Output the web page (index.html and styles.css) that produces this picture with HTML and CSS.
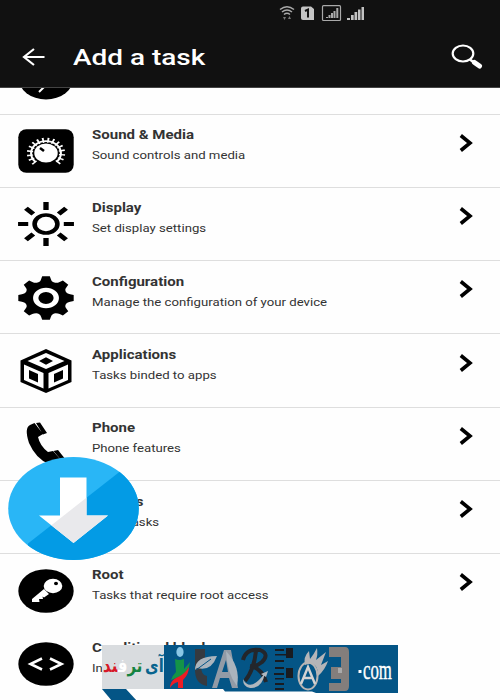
FILE: index.html
```
<!DOCTYPE html>
<html lang="en">
<head>
<meta charset="utf-8">
<title>Add a task</title>
<link rel="stylesheet" href="styles.css">
</head>
<body>
<div class="screen">
  <header class="top">
    <div class="status">
      <svg width="90" height="22" viewBox="0 0 90 22">
        <g fill="none" stroke="#aaa" stroke-width="1.500"><path d="M2 9.500Q9 4 16 9.500M4 12Q9 8 14 12M6 14.500Q9 12 12 14.500"/></g>
        <path d="M5 17h3l-1.500 3zM10 19h3l-1.500-3z" fill="#777"/>
        <path d="M25 6.500h8l3 2.500V20H25q-2 0-2-2V8.500q0-2 2-2z" fill="#c4c4c4"/>
        <path d="M27 11l3-1.500V17.500" fill="none" stroke="#111" stroke-width="2"/>
        <rect x="44.500" y="5.700" width="18" height="14.800" rx="1" fill="none" stroke="#a9a9a9" stroke-width="1.200"/>
        <path d="M48 18v-1h2v1zM50.500 18v-3h2v3zM53 18v-5h2v5zM55.500 18v-7h2v7zM58.300 18V8h2v10z" fill="#aaa"/>
        <path d="M69 20v-2h3v2zM73 20v-5h2.700v5zM76.500 20v-8h2.700v8zM80 20V9.500h2.500V20zM83.500 20V7h2.500v13z" fill="#c2c2c2"/>
      </svg>
    </div>
    <div class="bar">
      <svg class="back" width="24" height="20" viewBox="0 0 24 20"><path d="M13 2L3 10l10 8M3 10h20.500" fill="none" stroke="#fff" stroke-width="2.200"/></svg>
      <h1><span class="wide">Add a task</span></h1>
      <svg class="search" width="34" height="28" viewBox="0 0 34 28"><ellipse cx="13" cy="10.500" rx="10.300" ry="8" fill="none" stroke="#fff" stroke-width="2.200"/><path d="M20 16.500l4 3" stroke="#fff" stroke-width="2.600"/><path d="M24.500 19.500l5 3.500" stroke="#fff" stroke-width="5" stroke-linecap="round"/></svg>
    </div>
  </header>

  <ul class="list">
    <li class="row first">
      <svg class="icon" viewBox="0 0 56 44"><ellipse cx="28" cy="22" rx="27.500" ry="21.500" /><path d="M21 36l5-5" stroke="#fff" stroke-width="2"/></svg>
      <div class="text"><b class="wide"></b><span class="wide">Managing</span></div>
    </li>
    <li class="row">
      <svg class="icon" viewBox="0 0 56 44"><rect x=".3" y=".2" width="55.400" height="43.600" rx="8"/>
        <g transform="translate(28 24) scale(1.22 1)"><path d="M-9 10A13.200 13.200 0 1 1 9 10" fill="none" stroke="#fff" stroke-width="5" stroke-dasharray="1.400 2.650"/><path d="M-8.500 9A12.200 12.200 0 1 1 8.500 9" fill="none" stroke="#fff" stroke-width="1.700"/><circle r="9.600" fill="#fff"/></g>
        <path d="M22 19l4 3" stroke="#000" stroke-width="2.600"/></svg>
      <div class="text"><b class="wide">Sound &amp; Media</b><span class="wide">Sound controls and media</span></div>
      <svg class="chev" viewBox="0 0 14 18"><path d="M1.800 1.500L11 9l-9.200 7.500" /></svg>
    </li>
    <li class="row">
      <svg class="icon" viewBox="0 0 56 44"><g transform="translate(28 22) scale(1.27 1)" fill="none" stroke="#000"><circle r="9" stroke-width="3.600"/><path stroke-width="4.200" d="M0-22v8M0 22v-8M-22 0h8M22 0h-8M-15.800-15.800l5.800 5.800M15.800-15.800L10-10M-15.800 15.800L-10 10M15.800 15.800L10 10"/></g></svg>
      <div class="text"><b class="wide">Display</b><span class="wide">Set display settings</span></div>
      <svg class="chev" viewBox="0 0 14 18"><path d="M1.800 1.500L11 9l-9.200 7.500" /></svg>
    </li>
    <li class="row">
      <svg class="icon" viewBox="0 0 56 44"><g transform="translate(28 22) scale(1.27 1)">
        <circle r="16.800"/>
        <path id="t" d="M-6-15.500Q-4-17-3.800-19L-3-21.800H3L3.800-19Q4-17 6-15.500V15.500Q4 17 3.800 19L3 21.800H-3L-3.800 19Q-4 17-6 15.500z"/>
        <use href="#t" transform="rotate(45)"/><use href="#t" transform="rotate(90)"/><use href="#t" transform="rotate(135)"/>
        <circle r="8.100" fill="none" stroke="#fff" stroke-width="4.200"/></g></svg>
      <div class="text"><b class="wide">Configuration</b><span class="wide">Manage the configuration of your device</span></div>
      <svg class="chev" viewBox="0 0 14 18"><path d="M1.800 1.500L11 9l-9.200 7.500" /></svg>
    </li>
    <li class="row">
      <svg class="icon" viewBox="0 0 56 44"><path d="M28 0L53.500 11.500V33L28 44L2.500 33V11.500z"/>
        <path fill="#fff" d="M28 4L46.500 12L28 20L9.500 12zM6 15.500L25.500 24V39.500L6 31zM50 15.500L30.500 24V39.500L50 31z"/>
        <path d="M28 8.200L35 12L28 15.800L21 12zM11 21L20 25V33.500L11 29.500zM45 21L36 25V33.500L45 29.500z"/></svg>
      <div class="text"><b class="wide">Applications</b><span class="wide">Tasks binded to apps</span></div>
      <svg class="chev" viewBox="0 0 14 18"><path d="M1.800 1.500L11 9l-9.200 7.500" /></svg>
    </li>
    <li class="row">
      <svg class="icon" viewBox="0 0 56 44"><path d="M16.500 1L25 12L20 15Q22 24 30 30L35 29L43 38Q38 43 31 42Q18 37 11 21Q6 6 12 3zM18 1L22 .5L29 11L25 12.500zM35.500 29L40 28L48 38L44 39z"/></svg>
      <div class="text"><b class="wide">Phone</b><span class="wide">Phone features</span></div>
      <svg class="chev" viewBox="0 0 14 18"><path d="M1.800 1.500L11 9l-9.200 7.500" /></svg>
    </li>
    <li class="row">
      <div class="icon"></div>
      <div class="text"><b class="wide">Various</b><span class="wide">Other tasks</span></div>
      <svg class="chev" viewBox="0 0 14 18"><path d="M1.800 1.500L11 9l-9.200 7.500" /></svg>
    </li>
    <li class="row plain">
      <svg class="icon" viewBox="0 0 56 44"><ellipse cx="28" cy="22" rx="27.700" ry="21.800"/><ellipse cx="35" cy="17" rx="9.300" ry="7.200" fill="#fff"/><path d="M26 20L31 25L26 28.500L24.500 27.500L25 30L21 30L21.500 33L14 33V30z" fill="#fff"/><ellipse cx="38" cy="14.500" rx="2" ry="1.700"/></svg>
      <div class="text"><b class="wide">Root</b><span class="wide">Tasks that require root access</span></div>
      <svg class="chev" viewBox="0 0 14 18"><path d="M1.800 1.500L11 9l-9.200 7.500" /></svg>
    </li>
    <li class="row plain">
      <svg class="icon" viewBox="0 0 56 44"><ellipse cx="28" cy="22" rx="27.700" ry="21.800"/><path d="M24 16.500L12.500 22L24 27.500M32 16.500L43.500 22L32 27.500" fill="none" stroke="#fff" stroke-width="2.600"/></svg>
      <div class="text"><b class="wide">Conditional block</b><span class="wide">In</span></div>
    </li>
  </ul>

  <svg class="download" width="132" height="104" viewBox="0 0 132 104">
    <defs><clipPath id="disc"><ellipse cx="65.500" cy="52.500" rx="65.300" ry="51.500"/></clipPath>
    <clipPath id="arrow"><path d="M52 21.500H78.500V59.500H100L65.500 87L31 59.500H52z"/></clipPath></defs>
    <g clip-path="url(#disc)"><path fill="#29b6f6" d="M0 0h132v104H0z"/><path fill="#039be5" d="M112 15.500L20 87.500V104H132V0z"/></g>
    <g clip-path="url(#arrow)"><path fill="#fff" d="M0 0h132v104H0z"/><path fill="#e9e9ec" d="M112 15.500L20 87.500V104H132V0z"/></g>
  </svg>

  <div class="brand">
    <div class="fa" lang="fa" dir="rtl"><div class="word"><span class="c1">آی</span> <span class="c2">تر</span><span class="c3">ف</span><span class="c4">ند</span></div></div>
    <svg class="marks" width="234" height="48" viewBox="0 0 234 48">
      <path d="M0 0H234V48H152L148 46.500H61L59 44H0z" fill="#045586"/>
      <ellipse cx="16" cy="7" rx="3.600" ry="5" fill="#8bc7e6"/>
      <path d="M11 14Q15 16 20 14V24L26 17Q25 28 17 31L7 35Q8 31 12 27z" fill="#149447"/>
      <path d="M6 43Q6 36 12 33Q20 30 25 22Q25 29 19 35V43H14V37Q9 38 6 43z" fill="#ed1c24"/>
      <path d="M31 4H41V14L37 20Q37 31 43 31V41Q31 39 31 25z" fill="#363a40"/>
      <path d="M31 25Q31 11 53 11Q47 27 33 23z" fill="#aab4bd"/><path d="M32 25L47 14" stroke="#045586" stroke-width="1"/>
      <path d="M48 43L60 5H67L74 43H68L65 33H56L53 43zM58 27H64L62 15z" fill="#929ba6"/>
      <path d="M62 6Q77 22 73 41Q63 29 62 6z" fill="#aab4bd"/>
      <g fill="none" stroke="#23262b" stroke-width="4"><path d="M79 15Q82 3 96 5Q106 9 98 17Q92 22 86 21Q98 23 102 37M92 6Q90 25 81 36"/></g>
      <path d="M79 34Q86 48 101 28Q98 44 86 43Q79 42 79 34z" fill="#b0b7be"/><path d="M97 29l7-3-2 6z" fill="#b0b7be"/>
      <path d="M111 4h9v2h-9zM111 9h11v1.500h-11zM111 15h9v2h-9zM111 22h9v2h-9zM110 28h10v2h-10zM111 33h9v1.500h-9zM111 38h9v2h-9zM111 43h9v2h-9zM122 3h7v10h-7zM122 23h7v10h-7z" fill="#191b20"/>
      <path d="M141 20Q139 12 145 6L146 14Q150 9 153 3Q154 10 152 15L162 7L157 20L164 16Q161 25 154 31Q154 15 141 20z" fill="#b5b5b8"/>
      <ellipse cx="144" cy="31" rx="9.500" ry="13.500" fill="none" stroke="#b8b5b4" stroke-width="2"/>
      <path d="M137 39L144 22L151 39M140 33h8" fill="none" stroke="#d3d3d3" stroke-width="2.400"/>
      <path d="M165 2H181Q185 2 185 7V41Q185 46 181 46H165V38H177V34H167V22H177V12H165z" fill="#837e7c"/><path d="M174 23h4v5h-4z" fill="#aaa"/>
      <rect x="194.500" y="25" width="3" height="3" fill="#fff"/>
    </svg>
    <span class="com">com</span>
  </div>
  <svg class="tail" width="36" height="12" viewBox="0 0 36 12"><path d="M0 0H24L35 12H10z" fill="#045586"/></svg>
</div>
</body>
</html>
```
FILE: styles.css
```
* { box-sizing: border-box; }
body { margin: 0; background: #fff; font-family: Roboto, "Liberation Sans", sans-serif; }
.screen { position: relative; width: 500px; height: 700px; overflow: hidden; background: #fefefe; }
.top { position: relative; z-index: 1; height: 87.500px; background: #111; border-bottom: 1px solid #444; }
.status { height: 28px; padding-left: 278px; }
.status svg { display: block; }
.bar { display: flex; align-items: center; height: 58px; padding: 0 16px 0 21px; }
h1 { flex: 1; margin: 2px 0 0 28px; font-size: 22px; line-height: 28px; font-weight: 500; color: #fff; }
.wide { display: block; width: max-content; transform: scaleX(1.27); transform-origin: left; white-space: nowrap; }
.back, .search { flex: none; }
.list { margin: -46.300px 0 0; padding: 0; list-style: none; }
.row { display: flex; height: 73.300px; padding: 14.700px 27px 0 18px; border-bottom: 1.500px solid #dedede; }
.plain { border-bottom-color: transparent; }
.icon { flex: none; width: 56px; height: 44px; }
.text { flex: 1; margin-top: -1px; padding-left: 18px; color: #333; }
.text b { height: 21px; font-size: 12.400px; line-height: 13px; font-weight: 700; transform: scaleX(1.212); }
.text span { font-size: 11px; line-height: 13px; transform: scaleX(1.198); }
.chev { flex: none; width: 14px; height: 18px; margin-top: 4.500px; }
.chev path { fill: none; stroke: #000; stroke-width: 3.600; }
.download { position: absolute; left: 8px; top: 456px; }
.brand { position: absolute; left: 102px; top: 645px; display: flex; width: 296px; height: 48px; }
.fa { flex: none; width: 62px; height: 44px; overflow: hidden; background: #d9dcdf; }
.word { width: max-content; font: bold 19px/40px "DejaVu Sans", sans-serif; white-space: nowrap; word-spacing: -3px; transform: scaleX(.78); transform-origin: right; }
.c1 { color: #08648e; }
.c2 { color: #168340; }
.c3 { color: #fff; }
.c4 { color: #d71928; }
.marks { flex: none; }
.com { position: absolute; left: 261px; top: 9px; font: 28px/32px "Liberation Serif", serif; color: #fff; -webkit-text-stroke: .4px #fff; transform: scaleX(.6); transform-origin: left; }
.tail { position: absolute; left: 102px; top: 689px; }
```
